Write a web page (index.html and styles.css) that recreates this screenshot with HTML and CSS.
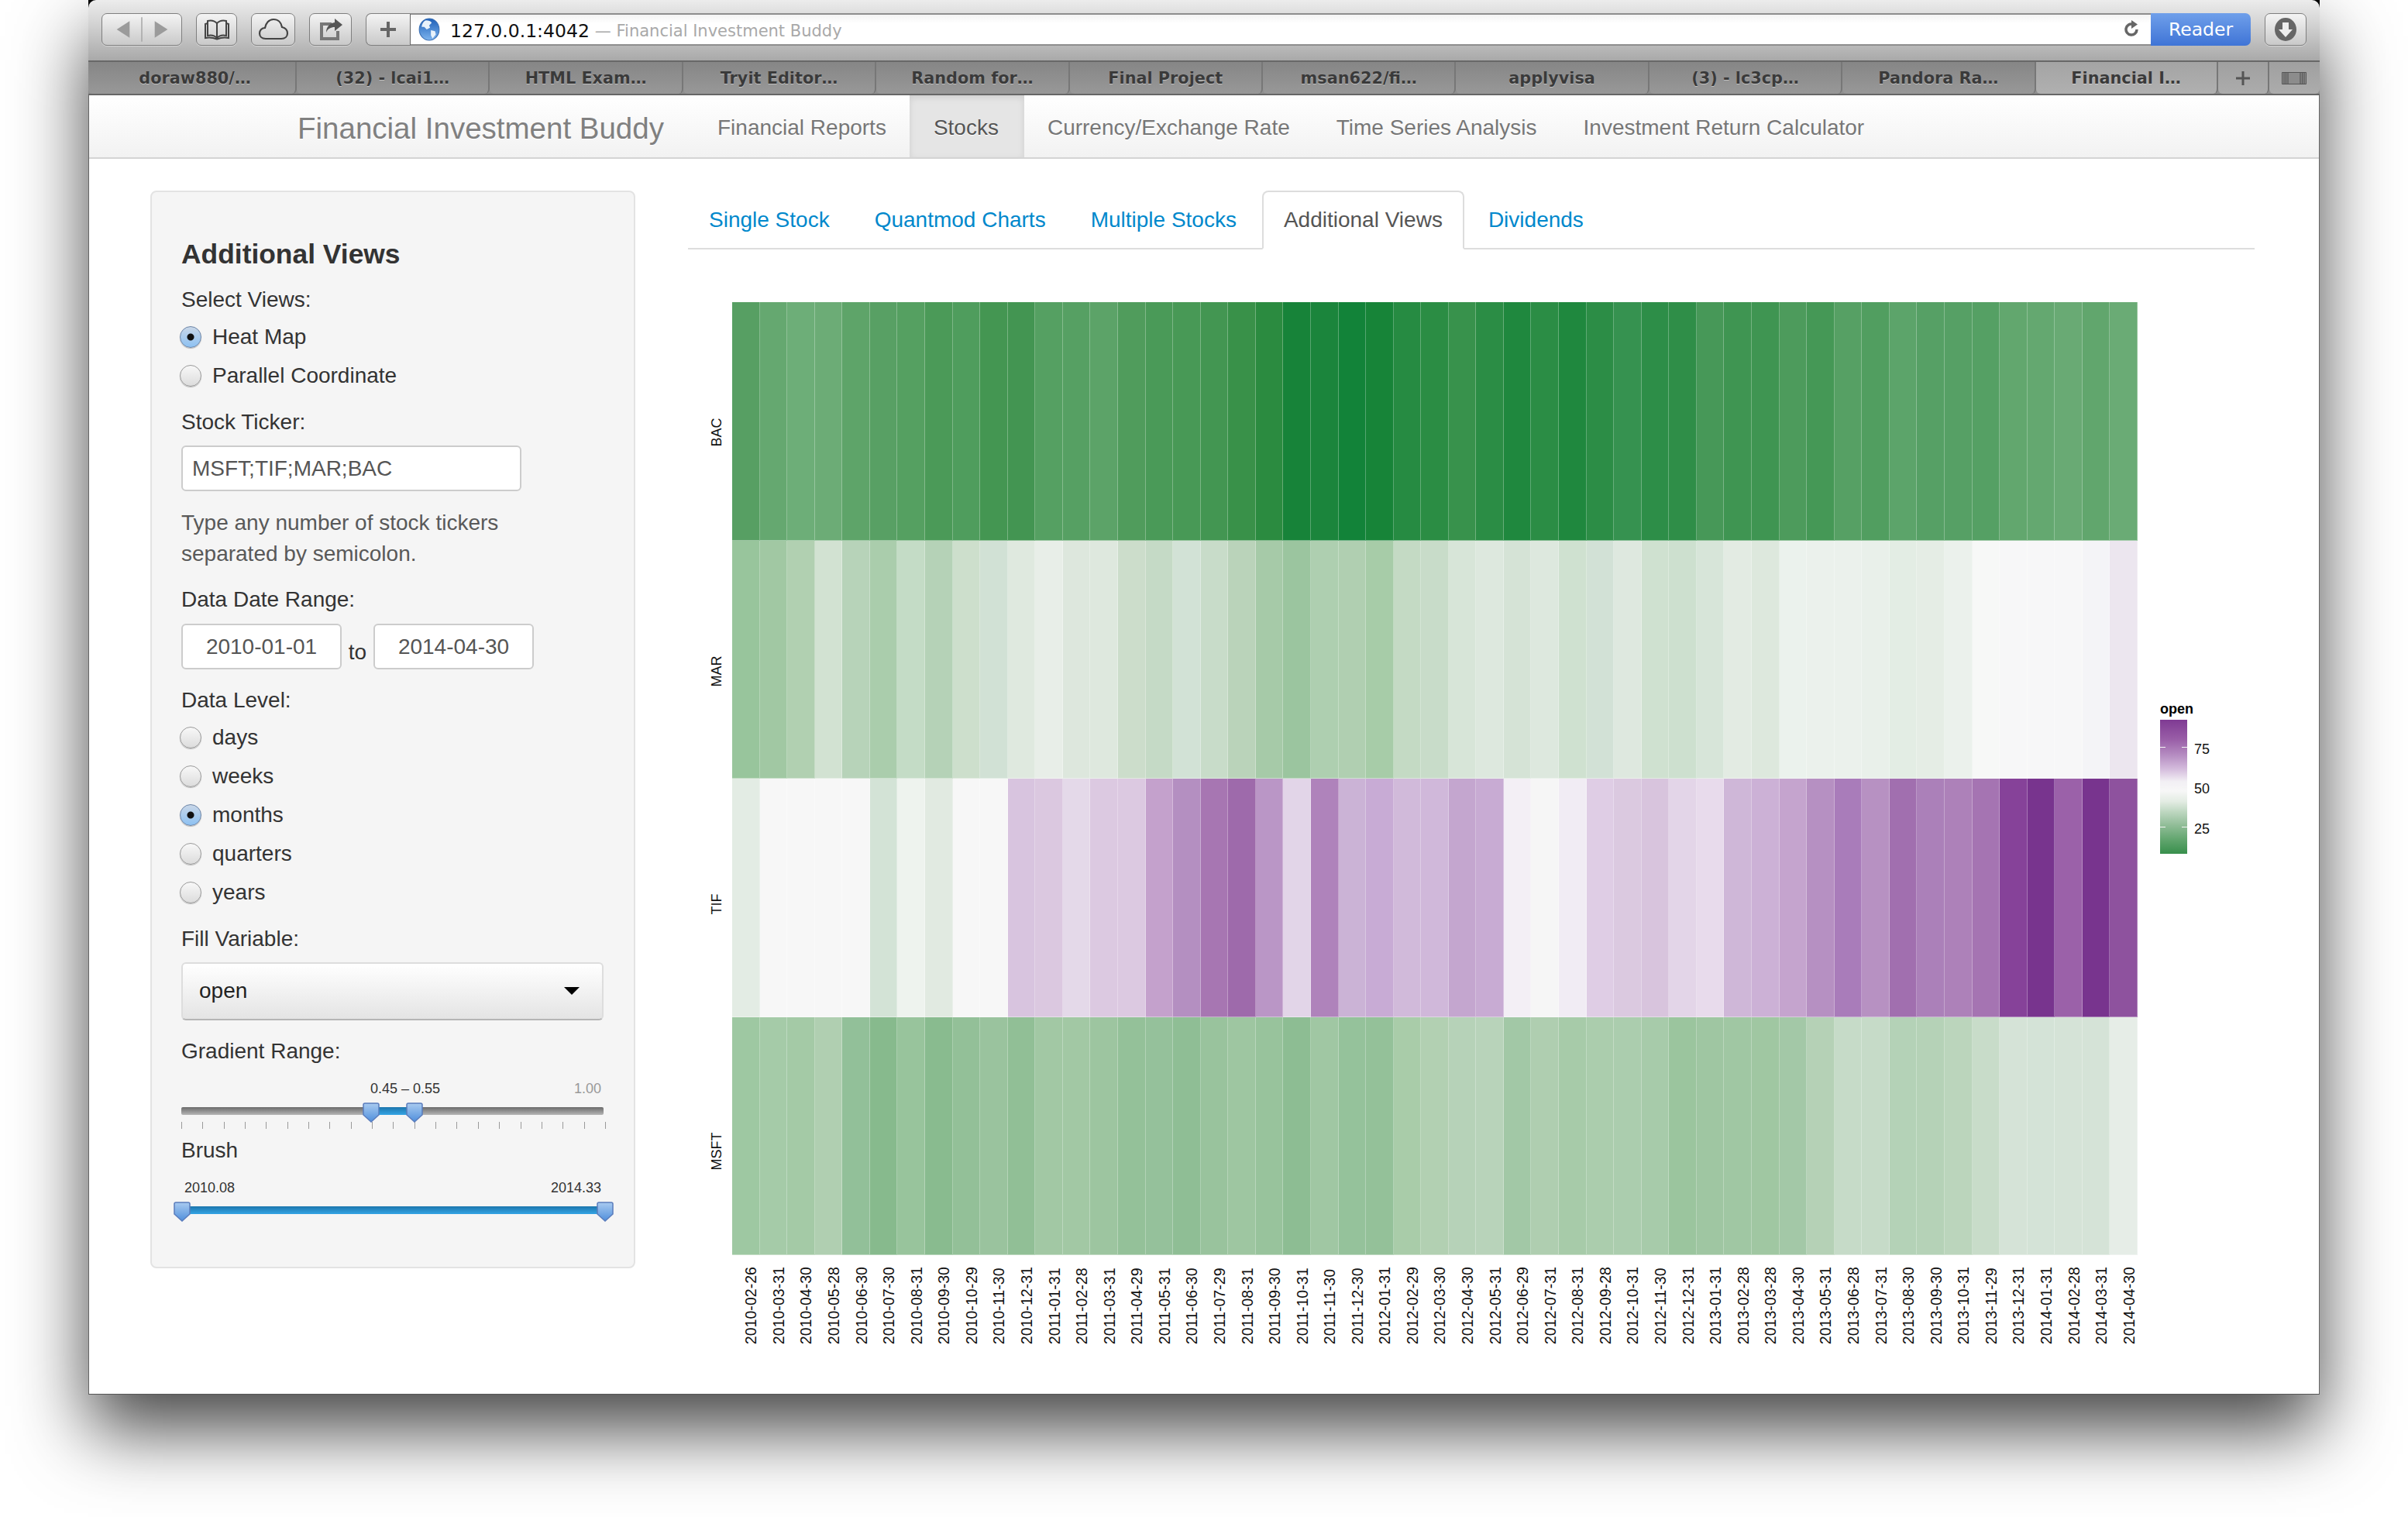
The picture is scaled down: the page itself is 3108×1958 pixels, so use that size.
FILE: index.html
```html
<!DOCTYPE html>
<html lang="en">
<head>
  <meta charset="UTF-8" />
  <title>Financial Investment Buddy</title>
  <link rel="stylesheet" href="styles.css">
</head>
<body>
  <svg class="defs" width="0" height="0">
    <defs>
      <linearGradient id="handleFill" x1="0" y1="0" x2="0" y2="1">
        <stop offset="0" stop-color="#a9cbf0"/>
        <stop offset="1" stop-color="#4f8fdc"/>
      </linearGradient>
      <linearGradient id="globeFill" x1="0" y1="0" x2="0" y2="1">
        <stop offset="0" stop-color="#1d5fb8"/>
        <stop offset="1" stop-color="#7db4ee"/>
      </linearGradient>
      <symbol id="handle" viewBox="0 0 22 26">
        <path d="M3 1h16a2 2 0 0 1 2 2v13l-10 9L1 16V3a2 2 0 0 1 2-2z" fill="url(#handleFill)" stroke="#5a7cbc" stroke-width="1.5"/>
      </symbol>
    </defs>
  </svg>

  <div class="window">
    <div class="toolbar">
      <div class="tb-btn btn-nav">
        <svg width="104" height="40" viewBox="0 0 104 40">
          <path d="M19 20l17-11v22z" fill="#9b9b9b"/>
          <path d="M52 4v32" stroke="#a5a5a5" stroke-width="1.5"/>
          <path d="M86 20L69 9v22z" fill="#9b9b9b"/>
        </svg>
      </div>
      <div class="tb-btn btn-book">
        <svg width="34" height="28" viewBox="0 0 34 28" fill="none" stroke="#444" stroke-width="2">
          <path d="M17 6c-3-3-8-4-12-3v19c4-1 9 0 12 3 3-3 8-4 12-3V3c-4-1-9 0-12 3z"/>
          <path d="M17 6v19"/>
          <path d="M5 6L2 7v18c5-1 10-.5 15 1.500 5-2 10-2.500 15-1.500V7l-3-1"/>
        </svg>
      </div>
      <div class="tb-btn btn-cloud">
        <svg width="40" height="30" viewBox="0 0 40 30" fill="none" stroke="#444" stroke-width="2.200">
          <path d="M10 27C5 27 2 24 2 20c0-4 3-7 7-7 1-6 5-11 11-11 6 0 10 4 11 10 4 1 7 4 7 8 0 4-3 7-8 7z"/>
        </svg>
      </div>
      <div class="tb-btn btn-share">
        <svg width="34" height="30" viewBox="0 0 34 30">
          <path d="M3 6h15v4H7v15h17v-8h4v12H3z" fill="#777"/>
          <path d="M22 1l10 8-10 8v-5c-5 0-9 2-11 7 0-8 5-12 11-13z" fill="#555"/>
        </svg>
      </div>
      <div class="address">
        <div class="btn-add">
          <svg width="24" height="24" viewBox="0 0 24 24"><path d="M10 2h4v8h8v4h-8v8h-4v-8H2v-4h8z" fill="#666"/></svg>
        </div>
        <div class="url">
          <svg class="globe" width="28" height="30" viewBox="0 0 26 28">
            <ellipse cx="13" cy="14" rx="12" ry="13" fill="url(#globeFill)" stroke="#3b6fb3"/>
            <path d="M9 3c3 0 6 1 7 3l-3 3 1 3-4 2-3-3-3 0c0-3 2-7 5-8zM15 15l5 1 1 4-4 5-2-4z" fill="#e8f2fb"/>
          </svg>
          <span class="url-host">127.0.0.1:4042</span>
          <span class="url-title">— Financial Investment Buddy</span>
          <svg class="reload" width="20" height="24" viewBox="0 0 20 24">
            <path d="M16 12a7 7 0 1 1-5-6.700" fill="none" stroke="#666" stroke-width="3.500"/>
            <path d="M9 0l8 5.500-8 5.500z" fill="#666"/>
          </svg>
        </div>
        <div class="reader">Reader</div>
      </div>
      <div class="tb-btn btn-download">
        <svg width="30" height="32" viewBox="0 0 30 32">
          <ellipse cx="15" cy="16" rx="14" ry="15" fill="#666"/>
          <path d="M11 7h8v9h5l-9 10-9-10h5z" fill="#eee"/>
        </svg>
      </div>
    </div>

    <div class="tabstrip">
      <div class="tab tab-first">doraw880/…</div>
      <div class="tab">(32) - lcai1…</div>
      <div class="tab">HTML Exam…</div>
      <div class="tab">Tryit Editor…</div>
      <div class="tab">Random for…</div>
      <div class="tab">Final Project</div>
      <div class="tab">msan622/fi…</div>
      <div class="tab">applyvisa</div>
      <div class="tab">(3) - lc3cp…</div>
      <div class="tab">Pandora Ra…</div>
      <div class="tab tab-current">Financial I…</div>
      <div class="tab tab-plus">
        <svg width="20" height="20" viewBox="0 0 20 20"><path d="M8.500 1h3v7.500H19v3h-7.500V19h-3v-7.500H1v-3h7.500z" fill="#555"/></svg>
      </div>
      <div class="tab tab-view">
        <svg width="32" height="16" viewBox="0 0 32 16">
          <path d="M.5.5h31v15H.5z" fill="#8c8c8c" stroke="#555"/>
          <path d="M3 1v14M5.500 1v14M8 1v14M24 1v14M26.500 1v14M29 1v14" stroke="#555" stroke-width="1.200"/>
        </svg>
      </div>
    </div>

    <div class="page">
      <nav class="navbar">
        <span class="brand">Financial Investment Buddy</span>
        <a class="nav-link">Financial Reports</a>
        <a class="nav-link active">Stocks</a>
        <a class="nav-link">Currency/Exchange Rate</a>
        <a class="nav-link">Time Series Analysis</a>
        <a class="nav-link">Investment Return Calculator</a>
      </nav>

      <div class="content">
        <aside class="well">
          <h4>Additional Views</h4>
          <div class="label label-first">Select Views:</div>
          <div class="radios">
            <div class="radio checked">Heat Map</div>
            <div class="radio">Parallel Coordinate</div>
          </div>

          <div class="label label-block">Stock Ticker:</div>
          <div class="input input-ticker">MSFT;TIF;MAR;BAC</div>
          <p class="help">Type any number of stock tickers<br>separated by semicolon.</p>

          <div class="label label-date">Data Date Range:</div>
          <div class="dates">
            <div class="input input-date">2010-01-01</div>
            <span class="date-to">to</span>
            <div class="input input-date">2014-04-30</div>
          </div>

          <div class="label label-level">Data Level:</div>
          <div class="radios">
            <div class="radio">days</div>
            <div class="radio">weeks</div>
            <div class="radio checked">months</div>
            <div class="radio">quarters</div>
            <div class="radio">years</div>
          </div>

          <div class="label label-block">Fill Variable:</div>
          <div class="select">open</div>

          <div class="label label-range">Gradient Range:</div>
          <div class="slider">
            <div class="slider-text">
              <span class="slider-spacer"></span>
              <span class="slider-mid">0.45 – 0.55</span>
              <span class="slider-max">1.00</span>
            </div>
            <div class="track">
              <div class="track-fill fill-range"></div>
              <svg class="handle handle-low"><use href="#handle"/></svg>
              <svg class="handle handle-high"><use href="#handle"/></svg>
            </div>
            <div class="ticks" id="ticks"></div>
          </div>

          <div class="label">Brush</div>
          <div class="slider slider-brush">
            <div class="slider-text brush-text">
              <span>2010.08</span>
              <span>2014.33</span>
            </div>
            <div class="track track-brush">
              <div class="track-fill fill-all"></div>
              <svg class="handle handle-start"><use href="#handle"/></svg>
              <svg class="handle handle-end"><use href="#handle"/></svg>
            </div>
          </div>
        </aside>

        <main class="panel">
          <ul class="nav-tabs">
            <li>Single Stock</li>
            <li>Quantmod Charts</li>
            <li>Multiple Stocks</li>
            <li class="active">Additional Views</li>
            <li>Dividends</li>
          </ul>

          <div class="chart">
            <div class="y-axis" id="yAxis"></div>
            <div class="plot">
              <div class="cells" id="cells"></div>
              <div class="x-axis" id="xAxis"></div>
            </div>
            <div class="legend">
              <div class="legend-title">open</div>
              <div class="legend-body">
                <div class="legend-bar">
                  <i class="legend-tick tick-75"></i>
                  <i class="legend-tick tick-50"></i>
                  <i class="legend-tick tick-25"></i>
                </div>
                <div class="legend-labels">
                  <span>75</span>
                  <span>50</span>
                  <span>25</span>
                </div>
              </div>
            </div>
          </div>
        </main>
      </div>
    </div>
  </div>

  <script src="chart.js"></script>
</body>
</html>
```

FILE: styles.css
```css
* {
  box-sizing: border-box;
}
html, body {
  margin: 0;
  padding: 0;
  background: #fff;
}
body {
  width: 3108px;
  height: 1958px;
  overflow: hidden;
  font-family: "Liberation Sans", Arial, sans-serif;
  font-size: 28px;
  color: #333;
}
.defs {
  position: absolute;
}

/* browser window */
.window {
  width: 2880px;
  height: 1800px;
  margin-left: 114px;
  background: #000;
  box-shadow: 0 46px 88px rgba(0, 0, 0, 0.72);
}
.toolbar {
  display: flex;
  gap: 18px;
  height: 78px;
  padding: 17px 17px 0;
  border-radius: 10px 10px 0 0;
  background: linear-gradient(#ececec, #d6d6d6 35%, #a9a9a9);
}
.tb-btn {
  display: flex;
  align-items: center;
  justify-content: center;
  height: 42px;
  border: 1px solid #7f7f7f;
  border-radius: 7px;
  background: linear-gradient(#f4f4f4, #c9c9c9);
  box-shadow: 0 1px 0 rgba(255, 255, 255, 0.4);
}
.btn-nav { width: 104px; }
.btn-book { width: 53px; }
.btn-cloud { width: 57px; }
.btn-share { width: 55px; }
.btn-download { width: 54px; }
.address {
  flex: 1;
  display: flex;
  height: 42px;
}
.btn-add {
  display: flex;
  align-items: center;
  justify-content: center;
  width: 58px;
  border: 1px solid #7f7f7f;
  border-right-color: #666;
  border-radius: 7px 0 0 7px;
  background: linear-gradient(#f4f4f4, #c9c9c9);
}
.url {
  flex: 1;
  display: flex;
  align-items: center;
  padding: 3px 0 0 10px;
  border-top: 2px solid #8e8e8e;
  border-bottom: 2px solid #8e8e8e;
  background: linear-gradient(#f4f4f4, #fff 30%);
  font-family: "DejaVu Sans", sans-serif;
  font-size: 23.500px;
  white-space: nowrap;
}
.globe {
  margin: -3px 13px 0 0;
}
.url-host {
  color: #111;
}
.url-title {
  margin-left: 7px;
  font-size: 21px;
  color: #a9a9a9;
}
.reload {
  margin: -3px 14px 0 auto;
}
.reader {
  display: flex;
  align-items: center;
  justify-content: center;
  width: 129px;
  border-radius: 0 7px 7px 0;
  background: linear-gradient(#6f9fea, #3f74d6);
  font-family: "DejaVu Sans", sans-serif;
  font-size: 23.500px;
  color: #fff;
}

/* browser tabs */
.tabstrip {
  display: flex;
  height: 45px;
  border-top: 2px solid #686868;
  border-bottom: 2px solid #666;
  background: #8f8f8f;
}
.tab {
  display: flex;
  align-items: center;
  justify-content: center;
  width: 249.400px;
  border-right: 2px solid #777;
  border-radius: 0 0 6px 6px;
  background: linear-gradient(#868686, #989898);
  font-family: "DejaVu Sans", sans-serif;
  font-size: 20.800px;
  font-weight: bold;
  color: #3a3a3a;
  text-shadow: 0 1px 0 rgba(255, 255, 255, 0.45);
  white-space: nowrap;
}
.tab-first {
  width: 269px;
  padding-left: 8px;
}
.tab-current {
  width: 235px;
  background: linear-gradient(#a4a4a4, #b0b0b0);
}
.tab-plus {
  width: 66px;
  background: linear-gradient(#a0a0a0, #acacac);
}
.tab-view {
  flex: 1;
  width: auto;
  border-right: 0;
  background: linear-gradient(#a0a0a0, #acacac);
}

/* page */
.page {
  height: 1677px;
  border-left: 1px solid #666;
  border-right: 1px solid #666;
  border-bottom: 1px solid #555;
  background: #fff;
}
.navbar {
  display: flex;
  align-items: stretch;
  height: 82px;
  padding-left: 269px;
  border-bottom: 2px solid #d4d4d4;
  background: linear-gradient(#fff, #f2f2f2);
  color: #777;
  text-shadow: 0 1px 0 #fff;
}
.brand {
  align-self: center;
  width: 512px;
  margin-top: 5px;
  font-size: 38.500px;
  color: #808080;
}
.nav-link {
  display: flex;
  align-items: center;
  padding: 3px 30px 0;
}
.nav-link.active {
  padding: 3px 33px 0 31px;
  background: #e5e5e5;
  color: #555;
  box-shadow: inset 0 3px 8px rgba(0, 0, 0, 0.1);
}
.content {
  display: flex;
  gap: 68px;
  padding: 41px 0 0 79px;
}

/* sidebar */
.well {
  width: 626px;
  height: 1391px;
  padding: 60px 38px 0;
  border: 2px solid #e3e3e3;
  border-radius: 8px;
  background: #f5f5f5;
  line-height: 40px;
}
.well h4 {
  margin: 0;
  font-size: 35.400px;
  line-height: 40px;
}
.label-first { margin-top: 19px; }
.label-block { margin-top: 15px; }
.label-date { margin-top: 19px; }
.label-level { margin-top: 20px; }
.label-range { margin-top: 20px; }
.radios {
  margin-top: 3px;
}
.radio {
  display: flex;
  align-items: center;
  height: 50px;
  margin-left: -2px;
}
.radio::before {
  content: "";
  flex: none;
  width: 26px;
  height: 26px;
  margin-right: 14px;
  border: 1px solid #9a9a9a;
  border-radius: 50%;
  background: linear-gradient(#f8f8f8, #dcdcdc);
  box-shadow: 0 1px 1px rgba(0, 0, 0, 0.25);
}
.radio.checked::before {
  border-color: #6d86a8;
  background: radial-gradient(circle at 50% 50%, #111 0, #111 4px, transparent 5px), linear-gradient(#c9d7e8, #8dc1f2);
}
.input {
  height: 59px;
  padding: 0 12px;
  border: 2px solid #ccc;
  border-radius: 6px;
  background: #fff;
  color: #555;
  line-height: 55px;
  white-space: nowrap;
}
.input-ticker {
  width: 439px;
  margin-top: 10px;
}
.help {
  margin: 21px 0 0;
  color: #595959;
}
.dates {
  display: flex;
  margin-top: 11px;
}
.input-date {
  width: 207px;
  text-align: center;
}
.date-to {
  width: 41px;
  padding-top: 17px;
  text-align: center;
}
.select {
  position: relative;
  width: 545px;
  height: 75px;
  margin-top: 10px;
  padding-left: 21px;
  border: 2px solid #ddd;
  border-bottom-color: #b5b5b5;
  border-radius: 6px;
  background: linear-gradient(#fff, #e4e4e4);
  color: #222;
  line-height: 69px;
}
.select::after {
  content: "";
  position: absolute;
  left: 492px;
  top: 30px;
  border-left: 10px solid transparent;
  border-right: 10px solid transparent;
  border-top: 10px solid #000;
}

/* sliders */
.slider {
  height: 88px;
  padding-top: 16px;
}
.slider-brush {
  height: 80px;
}
.slider-text {
  display: flex;
  height: 24px;
  font-size: 18px;
  line-height: 24px;
  color: #333;
}
.slider-spacer {
  width: 244px;
}
.slider-mid {
  width: 263px;
}
.slider-max {
  color: #999;
}
.brush-text {
  justify-content: space-between;
  padding: 0 4px;
}
.track {
  position: relative;
  width: 545px;
  height: 10px;
  margin-top: 12px;
  border-radius: 2px;
  background: linear-gradient(#6a6a6a, #b5b5b5);
}
.track-brush {
  width: 546px;
  margin-left: 1px;
}
.track-fill {
  position: absolute;
  top: 0;
  bottom: 0;
  background: linear-gradient(#1c76ad, #34a4e4);
}
.fill-range {
  left: 245px;
  width: 56px;
}
.fill-all {
  left: 0;
  right: 0;
}
.handle {
  position: absolute;
  top: -6px;
  width: 22px;
  height: 26px;
}
.handle-low { left: 234px; }
.handle-high { left: 290px; }
.handle-start { left: -11px; }
.handle-end { left: 535px; }
.ticks {
  display: flex;
  justify-content: space-between;
  width: 548px;
  height: 9px;
  margin-top: 9px;
}
.ticks i {
  width: 1px;
  background: #9a9a9a;
}

/* main panel */
.panel {
  width: 2022px;
}
.nav-tabs {
  display: flex;
  gap: 4px;
  height: 76px;
  margin: 0;
  padding: 0;
  list-style: none;
  border-bottom: 2px solid #ddd;
  color: #08c;
}
.nav-tabs li {
  height: 76px;
  padding: 0 25px;
  border: 2px solid transparent;
  line-height: 72px;
}
.nav-tabs li.active {
  margin-left: 2px;
  padding: 0 26px;
  border-color: #ddd #ddd #fff;
  border-radius: 8px 8px 0 0;
  background: #fff;
  color: #555;
}

/* heat map */
.chart {
  display: flex;
  margin-top: 68px;
}
.y-axis {
  width: 57px;
  height: 1230px;
  padding-left: 27px;
  font-size: 18px;
  color: #111;
}
.y-label {
  height: 307.500px;
  padding-bottom: 149px;
  writing-mode: vertical-rl;
  transform: rotate(180deg);
  text-align: end;
  line-height: 20px;
}
.plot {
  width: 1814px;
}
.cells {
  display: grid;
  grid-template-columns: repeat(51, 1fr);
  grid-template-rows: repeat(4, 307.500px);
}
.cell {
  border-right: 1px solid rgba(255, 255, 255, 0.28);
  border-bottom: 1px solid rgba(255, 255, 255, 0.4);
}
.x-axis {
  display: grid;
  grid-template-columns: repeat(51, 1fr);
  margin-top: 15px;
  font-size: 19.600px;
  color: #111;
}
.x-label {
  justify-self: center;
  margin-left: 13px;
  writing-mode: vertical-rl;
  transform: rotate(180deg);
  line-height: 20px;
}
.legend {
  width: 80px;
  margin: 513px 0 0 29px;
}
.legend-title {
  height: 26px;
  font-size: 18px;
  font-weight: bold;
  line-height: 24px;
  color: #000;
}
.legend-body {
  display: flex;
}
.legend-bar {
  position: relative;
  width: 35px;
  height: 173px;
  background: linear-gradient(#7f3a93, #9a5fa8 15%, #b78fc3 27%, #d5bddd 37%, #f2eff4 46%, #f7f7f7 53%, #e3ece3 61%, #bcd6bf 69%, #8fbc96 79%, #5fa46c 90%, #388f4c);
}
.legend-tick {
  position: absolute;
  left: 0;
  right: 0;
  height: 1px;
  background: linear-gradient(90deg, #f4f4f4 7px, transparent 7px, transparent 28px, #f4f4f4 28px);
}
.tick-75 { top: 35px; }
.tick-50 { top: 87px; }
.tick-25 { top: 138px; }
.legend-labels {
  position: relative;
  flex: 1;
  padding-left: 9px;
  font-size: 18px;
  color: #111;
}
.legend-labels span {
  position: absolute;
}
.legend-labels span:nth-child(1) { top: 28px; }
.legend-labels span:nth-child(2) { top: 79px; }
.legend-labels span:nth-child(3) { top: 131px; }
```

FILE: chart.js
```js
const dates = [
  '2010-02-26','2010-03-31','2010-04-30','2010-05-28','2010-06-30','2010-07-30','2010-08-31','2010-09-30','2010-10-29','2010-11-30','2010-12-31',
  '2011-01-31','2011-02-28','2011-03-31','2011-04-29','2011-05-31','2011-06-30','2011-07-29','2011-08-31','2011-09-30','2011-10-31','2011-11-30','2011-12-30',
  '2012-01-31','2012-02-29','2012-03-30','2012-04-30','2012-05-31','2012-06-29','2012-07-31','2012-08-31','2012-09-28','2012-10-31','2012-11-30','2012-12-31',
  '2013-01-31','2013-02-28','2013-03-28','2013-04-30','2013-05-31','2013-06-28','2013-07-31','2013-08-30','2013-09-30','2013-10-31','2013-11-29','2013-12-31',
  '2014-01-31','2014-02-28','2014-03-31','2014-04-30'
];

// cell colours per ticker, one per month
const rows = {
  BAC: '579f63 65a870 6dae78 6cac76 5ea469 58a064 55a061 4b9a58 4f9d5d 449652 439552 55a062 56a063 5ca368 509c5c 4a9a58 489956 439652 399149 2b8b40 178339 1b853c 128339 178438 268b42 2b8d44 38924c 2b8d45 1f883e 2b8d45 1f883e 2c8d46 369250 2d8e48 2f8e48 479858 3f9552 3f9552 4d9b5c 459856 56a064 519e60 5ca46a 56a065 56a065 55a064 62a76e 64a870 69aa74 61a66d 6aab75',
  MAR: '98c59c a1c8a3 b1d0b1 d2e2d2 b7d3b9 aacdac c4dcc6 b5d2b7 cddfcc d1e1d5 dfe9df e8eee8 dde7dd dee8de ccddcb c5dac6 d2e2d6 c8dcc9 bad3ba a6caa8 9bc59f aecfb0 b0cfb1 a7cca8 c4dac4 c8dcc9 d7e5d8 dde8de d5e3d6 dde8de cfe1d0 d2e1d6 dee8df cfe1d0 cde0cf d7e5d9 e3ebe3 dde8dd ebf2ed ebf1ec ebf1ec e9f0ea e3ede4 e5ede5 ebf1ec f7f8f7 f7f7f8 f7f7f8 f7f7f8 f4f4f7 ece6ef',
  TIF: 'e3ece4 f7f7f7 f7f7f7 f7f7f7 f7f7f7 d3e3d6 eef3ee e1eae1 f7f7f7 f7f7f7 d8c4df dbc8e0 e4d9e9 dcc9e1 dcc9e1 c4a1cc b48fc1 a776b2 9e6aab ba96c6 e2d5e8 af83bb cbb3d6 c8abd5 d1bada d0b8da c4a6cf c8abd3 f3eff5 f6f6f6 f1ecf4 dfcde5 dbc9e0 d8c4dd e3d5e8 e8dbec cfb7d8 ccb1d6 c5a4ce b690c2 a97cba b791c2 a16faf ab80b9 ad81b9 a574b2 864299 78348e 9b61a9 78348e 8e529e',
  MSFT: '9ec8a2 a5cba8 a4caa6 b0cfb1 92c099 87ba8d 98c49c 89bb8f 93c098 9ac39e 91bf96 a2c8a4 a2c8a4 9dc5a0 94c199 95c19b 8fbe95 99c39d 9ec6a1 98c39c 8dbd93 a0c7a3 95c29b 94c199 a9cca9 b2d0b2 b6d2b8 b8d3ba a2c8a6 afceb0 a7cba9 abcdad abcdae a7cbaa 9bc59e 9fc6a2 a0c7a3 a0c7a2 a3c8a7 b5d1b6 c6dbc8 c6dbc8 b4d2b7 b5d2b7 bbd5bc c8dcc9 d5e3d7 d4e3d7 d5e3d7 d5e3d7 e6ede7'
};

const cells = document.getElementById('cells');
const yAxis = document.getElementById('yAxis');
const xAxis = document.getElementById('xAxis');
const ticks = document.getElementById('ticks');

Object.keys(rows).forEach((name) => {
  const label = document.createElement('div');
  label.className = 'y-label';
  label.textContent = name;
  yAxis.appendChild(label);

  rows[name].split(' ').forEach((hex) => {
    const cell = document.createElement('div');
    cell.className = 'cell';
    cell.style.background = '#' + hex;
    cells.appendChild(cell);
  });
});

dates.forEach((date) => {
  const label = document.createElement('div');
  label.className = 'x-label';
  label.textContent = date;
  xAxis.appendChild(label);
});

for (let i = 0; i < 21; i++) {
  ticks.appendChild(document.createElement('i'));
}
```
